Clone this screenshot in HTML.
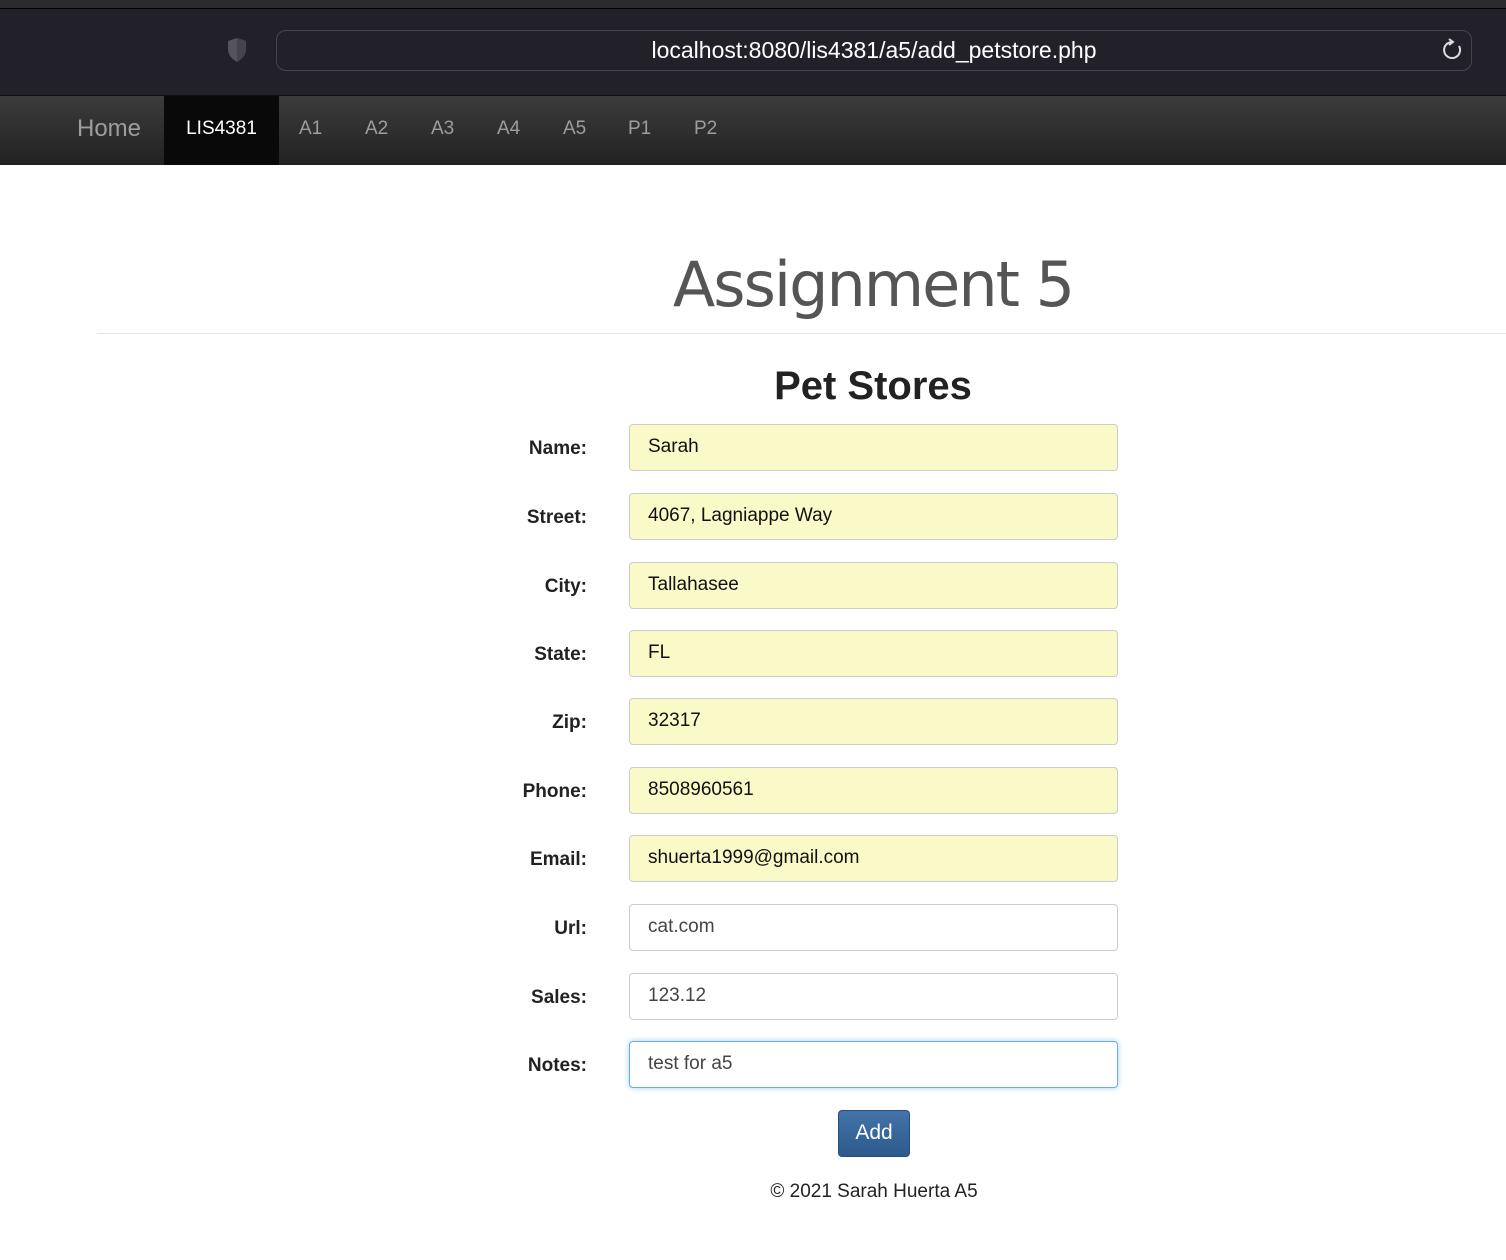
<!DOCTYPE html>
<html><head><meta charset="utf-8"><style>
*{box-sizing:border-box;margin:0;padding:0}
body{width:1506px;height:1260px;background:#fff;font-family:"Liberation Sans",Arial,sans-serif;position:relative;overflow:hidden}
.top{position:absolute;left:0;top:0;width:1506px;height:95px;background:#22212a;border-top:8px solid #2a2a2c}
.top:before{content:"";position:absolute;left:0;top:0;width:100%;height:1px;background:#000}
.url{position:absolute;left:276px;top:22px;width:1196px;height:41px;border:1px solid #46454f;border-radius:10px;color:#fff;font-size:23px;text-align:center;line-height:39px}
.nav{position:absolute;left:0;top:95px;width:1506px;height:70px;background:linear-gradient(#3c3c3c,#222);border-top:1px solid #111}
.nav span{position:absolute;top:0;height:69px;line-height:66px;color:#9d9d9d;font-size:19px}
.nav .act{background:#090909;color:#fff;left:164px;width:115px;text-align:center}
h1{position:absolute;left:0;width:1746px;top:248px;text-align:center;font-family:"DejaVu Sans",sans-serif;font-weight:normal;font-size:62px;color:#555;letter-spacing:-2px}
.hr{position:absolute;left:97px;top:333px;width:1409px;height:1px;background:#e5e5e5}
h2{position:absolute;left:0;width:1746px;top:364px;text-align:center;font-weight:bold;font-size:40px;color:#222}
.lab{position:absolute;right:919px;font-weight:bold;font-size:19px;color:#222}
.in{position:absolute;left:629px;width:489px;height:47px;border:1px solid #ccc;border-radius:4px;background:#fafac8;padding-left:18px;line-height:43px;font-size:19px;color:#111}
.in.w{background:#fff;color:#444}
.in.f{border-color:#66afe9;box-shadow:0 0 6px rgba(102,175,233,.6)}
.btn{position:absolute;left:838px;top:1110px;width:72px;height:47px;border-radius:4px;background:linear-gradient(#4373a8,#2c5a8c);border:1px solid #25507e;color:#fff;font-size:21px;text-align:center;line-height:44px}
.foot{position:absolute;left:0;width:1748px;top:1181px;text-align:center;font-size:19px;color:#222}
</style></head><body>
<div class="top">
<svg style="position:absolute;left:226px;top:29px" width="22" height="26" viewBox="0 0 22 26"><path d="M11 1L2 4v8c0 6 4 10 9 13c5-3 9-7 9-13V4z" fill="#55545e"/><path d="M11 1v24c5-3 9-7 9-13V4z" fill="#45444d"/></svg>
<div class="url">localhost:8080/lis4381/a5/add_petstore.php</div>
<svg style="position:absolute;left:1442px;top:30px" width="20" height="22" viewBox="0 0 20 22"><path d="M10 4a8 8 0 1 0 7 4" fill="none" stroke="#ddd" stroke-width="2"/><path d="M7 1l4 3-4 3" fill="none" stroke="#ddd" stroke-width="2"/></svg>
</div>
<div class="nav">
<span style="left:77px;font-size:24px">Home</span>
<span class="act">LIS4381</span>
<span style="left:299px">A1</span><span style="left:365px">A2</span><span style="left:431px">A3</span><span style="left:497px">A4</span><span style="left:563px">A5</span><span style="left:628px">P1</span><span style="left:694px">P2</span>
</div>
<h1>Assignment 5</h1>
<div class="hr"></div>
<h2>Pet Stores</h2>
<div class="lab" style="top:438px">Name:</div><div class="in" style="top:424px">Sarah</div>
<div class="lab" style="top:507px">Street:</div><div class="in" style="top:493px">4067, Lagniappe Way</div>
<div class="lab" style="top:576px">City:</div><div class="in" style="top:562px">Tallahasee</div>
<div class="lab" style="top:644px">State:</div><div class="in" style="top:630px">FL</div>
<div class="lab" style="top:712px">Zip:</div><div class="in" style="top:698px">32317</div>
<div class="lab" style="top:781px">Phone:</div><div class="in" style="top:767px">8508960561</div>
<div class="lab" style="top:849px">Email:</div><div class="in" style="top:835px">shuerta1999@gmail.com</div>
<div class="lab" style="top:918px">Url:</div><div class="in w" style="top:904px">cat.com</div>
<div class="lab" style="top:987px">Sales:</div><div class="in w" style="top:973px">123.12</div>
<div class="lab" style="top:1055px">Notes:</div><div class="in w f" style="top:1041px">test for a5</div>
<div class="btn">Add</div>
<div class="foot">© 2021 Sarah Huerta A5</div>
</body></html>
